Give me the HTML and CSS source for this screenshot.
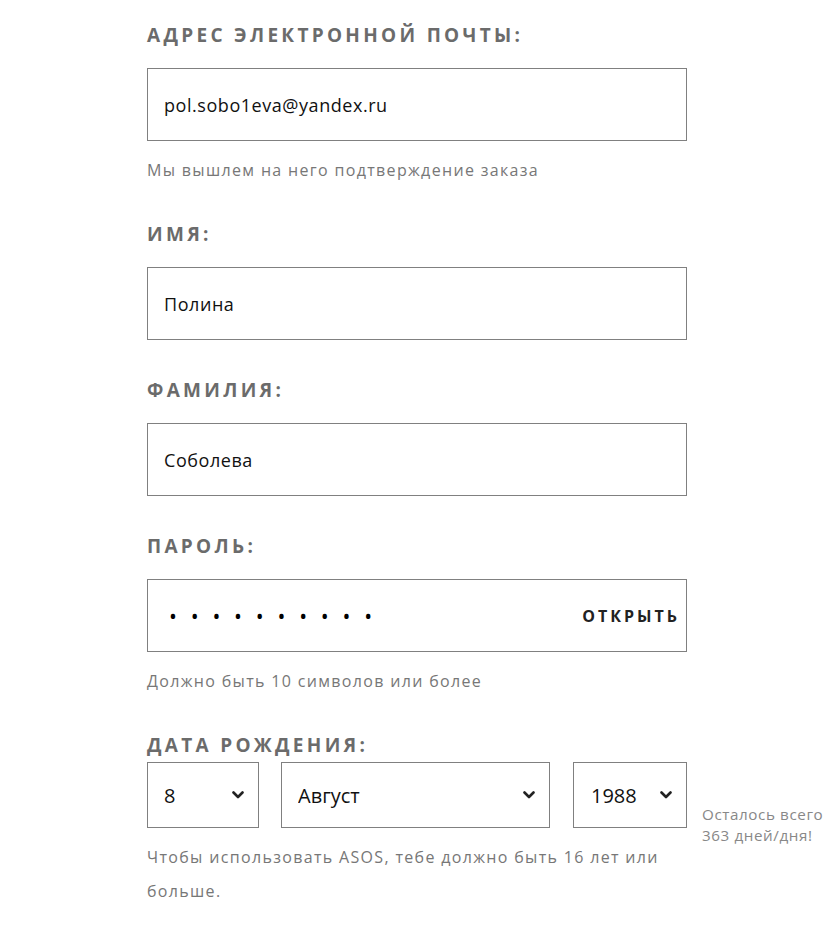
FILE: index.html
```html
<!DOCTYPE html>
<html lang="ru">
<head>
<meta charset="utf-8">
<title>Регистрация</title>
<link rel="stylesheet" href="styles.css">
</head>
<body>
<form class="form">
  <div class="field">
    <label class="label" for="email">Адрес электронной почты:</label>
    <input class="input" id="email" type="text" value="pol.sobo1eva@yandex.ru">
    <p class="hint">Мы вышлем на него подтверждение заказа</p>
  </div>
  <div class="field">
    <label class="label" for="name">Имя:</label>
    <input class="input" id="name" type="text" value="Полина">
  </div>
  <div class="field">
    <label class="label" for="surname">Фамилия:</label>
    <input class="input" id="surname" type="text" value="Соболева">
  </div>
  <div class="field">
    <label class="label" for="pass">Пароль:</label>
    <div class="pass-wrap">
      <div class="input pass" id="pass"><span class="dots">••••••••••</span></div>
      <button type="button" class="show">Открыть</button>
    </div>
    <p class="hint">Должно быть 10 символов или более</p>
  </div>
  <div class="field">
    <label class="label label-date">Дата рождения:</label>
    <div class="date-row">
      <div class="selects">
        <div class="sel sel-day">
          <select><option>8</option></select>
          <svg class="chev" viewBox="0 0 12 8" width="12" height="8"><path d="M1.5 1.5 L6 6 L10.5 1.5" fill="none" stroke="#222" stroke-width="2.6" stroke-linecap="round" stroke-linejoin="round"/></svg>
        </div>
        <div class="sel sel-month">
          <select><option>Август</option></select>
          <svg class="chev" viewBox="0 0 12 8" width="12" height="8"><path d="M1.5 1.5 L6 6 L10.5 1.5" fill="none" stroke="#222" stroke-width="2.6" stroke-linecap="round" stroke-linejoin="round"/></svg>
        </div>
        <div class="sel sel-year">
          <select><option>1988</option></select>
          <svg class="chev" viewBox="0 0 12 8" width="12" height="8"><path d="M1.5 1.5 L6 6 L10.5 1.5" fill="none" stroke="#222" stroke-width="2.6" stroke-linecap="round" stroke-linejoin="round"/></svg>
        </div>
      </div>
      <p class="note">Осталось всего<br>363 дней/дня!</p>
    </div>
    <p class="hint hint-age">Чтобы использовать ASOS, тебе должно быть 16 лет или больше.</p>
  </div>
</form>
</body>
</html>
```
FILE: styles.css
```css
* { box-sizing: border-box; }
html, body { margin: 0; padding: 0; background: #fff; }
body {
  font-family: "Open Sans", "Noto Sans", sans-serif;
  color: #111;
}
.form {
  width: 540px;
  margin-left: 147px;
  padding-top: 23px;
}
.field { margin-bottom: 38px; }
.label {
  display: block;
  font-size: 19px;
  line-height: 24px;
  font-weight: 700;
  text-transform: uppercase;
  letter-spacing: 3.3px;
  color: #6b6b6b;
  margin-bottom: 21px;
}
.label-date { margin-bottom: 5px; }
.input {
  display: block;
  width: 540px;
  height: 73px;
  border: 1px solid #808080;
  border-radius: 0;
  padding: 0 16px;
  font-family: inherit;
  font-size: 18px;
  letter-spacing: 0.55px;
  color: #111;
  background: #fff;
  outline: none;
}
.hint {
  margin: 17px 0 0;
  font-size: 16px;
  line-height: 24px;
  letter-spacing: 1.33px;
  color: #777;
}
.field:has(.hint) { margin-bottom: 40px; }
.pass-wrap { position: relative; }
.pass {
  display: flex;
  align-items: center;
  padding-left: 21px;
}
.dots {
  font-size: 21px;
  letter-spacing: 13.8px;
  color: #000;
}
.show {
  position: absolute;
  right: 10px;
  top: 24px;
  height: 26px;
  padding: 0;
  border: 0;
  background: transparent;
  font-family: inherit;
  font-size: 16px;
  font-weight: 700;
  letter-spacing: 3px;
  text-transform: uppercase;
  color: #222;
  margin-right: -3px;
}
.date-row { display: flex; height: 66px; }
.selects {
  display: flex;
  gap: 22px;
  width: 540px;
  flex: none;
}
.sel { position: relative; height: 66px; }
.sel-day { width: 112px; }
.sel-month { width: 269px; }
.sel-year { width: 114px; margin-left: 1px; }
.sel select {
  appearance: none;
  -webkit-appearance: none;
  width: 100%;
  height: 100%;
  border: 1px solid #808080;
  border-radius: 0;
  background: #fff;
  padding: 0 16px;
  font-family: inherit;
  font-size: 20px;
  color: #111;
  outline: none;
}
.sel-year select { padding-left: 17px; }
.chev {
  position: absolute;
  right: 15px;
  top: 29px;
  pointer-events: none;
}
.note {
  margin: 42px 0 0 15px;
  font-size: 15.2px;
  line-height: 21px;
  letter-spacing: 0.6px;
  color: #888;
  white-space: nowrap;
}
.hint-age {
  margin-top: 12px;
  line-height: 34px;
  width: 530px;
}
```
